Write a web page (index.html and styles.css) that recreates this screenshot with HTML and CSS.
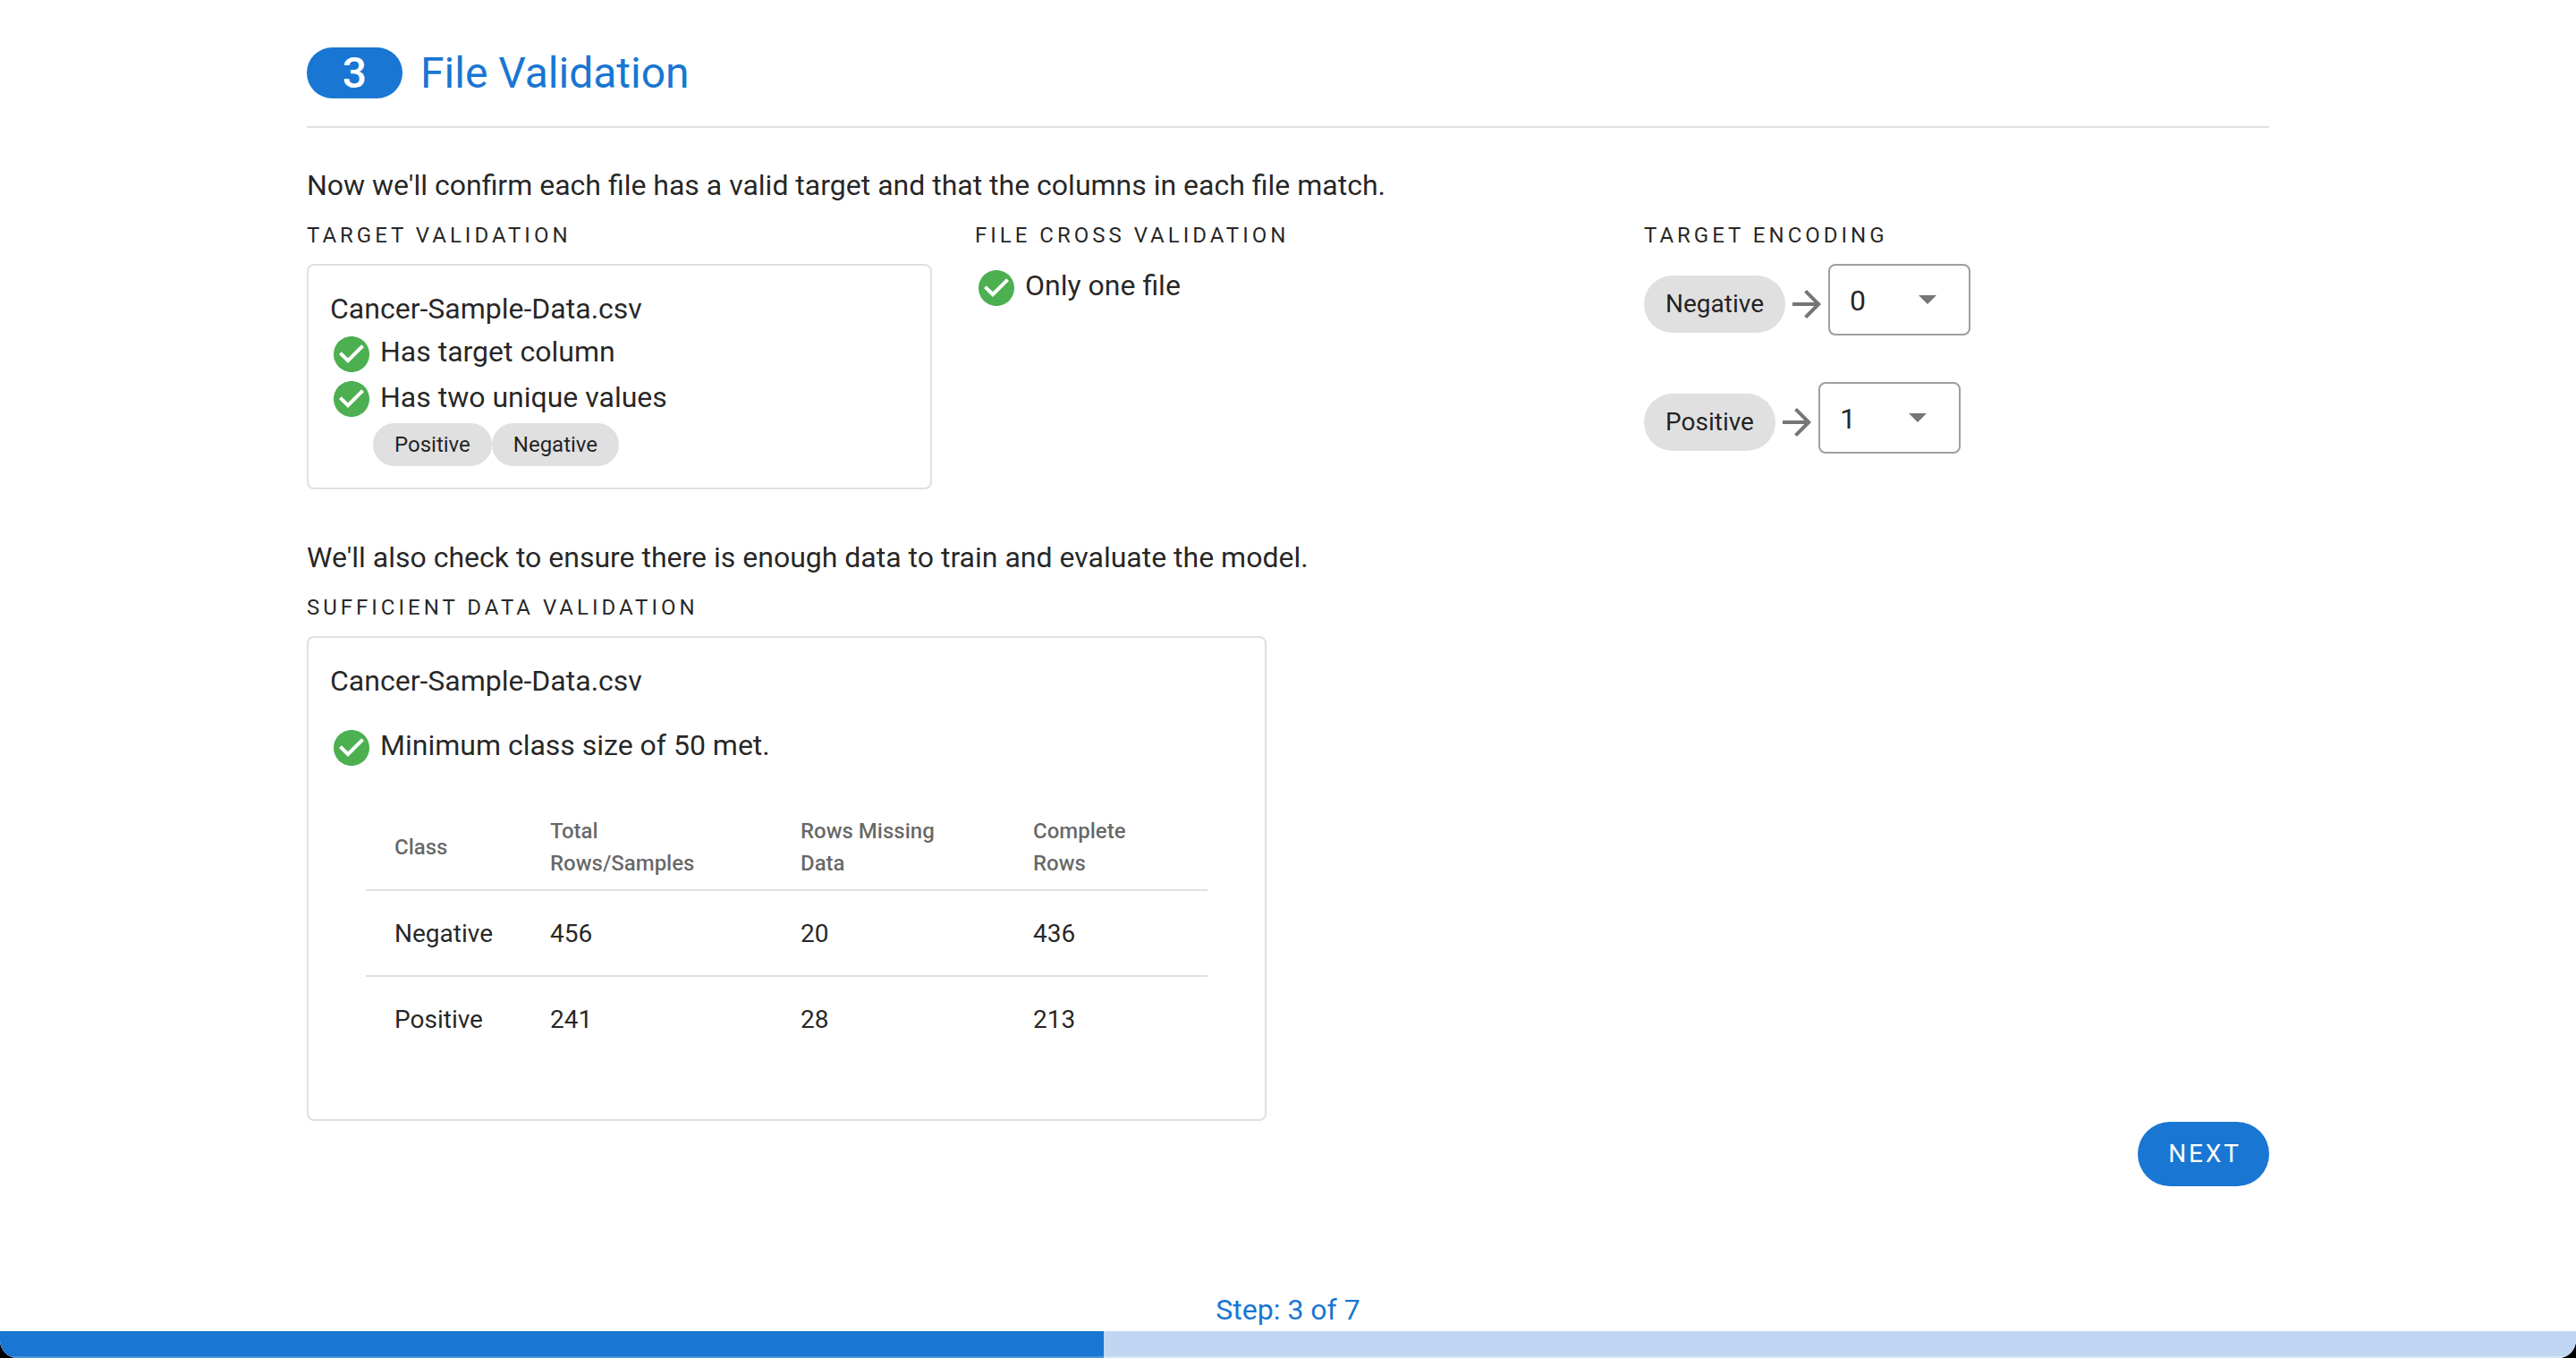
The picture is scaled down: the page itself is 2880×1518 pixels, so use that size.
FILE: index.html
```
<!DOCTYPE html>
<html lang="en">
<head>
    <meta charset="UTF-8">
    <title>File Validation</title>
    <link rel="stylesheet" href="styles.css">
</head>
<body>
    <svg class="icon-defs" width="0" height="0">
        <symbol id="check" viewBox="0 0 24 24">
            <path fill="#4caf50" d="M12 2C6.48 2 2 6.48 2 12s4.48 10 10 10 10-4.48 10-10S17.52 2 12 2z"/>
            <path fill="#fff" d="M10 17l-5-5 1.41-1.41L10 14.17l7.59-7.59L19 8l-9 9z"/>
        </symbol>
        <symbol id="arrow" viewBox="0 0 24 24">
            <path fill="#757575" d="M12 4l-1.41 1.41L16.17 11H4v2h12.17l-5.58 5.59L12 20l8-8z"/>
        </symbol>
    </svg>

    <main class="step">
        <header class="step-header">
            <span class="step-badge">3</span>
            <h1 class="step-title">File Validation</h1>
        </header>

        <p class="intro">Now we'll confirm each file has a valid target and that the columns in each file match.</p>

        <div class="columns">
            <section class="column">
                <h2 class="overline">Target Validation</h2>
                <div class="card card-target">
                    <div class="file-name">Cancer-Sample-Data.csv</div>
                    <div class="check-row"><svg class="check"><use href="#check"/></svg><span>Has target column</span></div>
                    <div class="check-row"><svg class="check"><use href="#check"/></svg><span>Has two unique values</span></div>
                    <div class="chips">
                        <span class="chip">Positive</span>
                        <span class="chip">Negative</span>
                    </div>
                </div>
            </section>

            <section class="column">
                <h2 class="overline">File Cross Validation</h2>
                <div class="check-row cross-row"><svg class="check"><use href="#check"/></svg><span>Only one file</span></div>
            </section>

            <section class="column">
                <h2 class="overline">Target Encoding</h2>
                <div class="encoding-row">
                    <span class="chip chip-large">Negative</span>
                    <svg class="arrow"><use href="#arrow"/></svg>
                    <div class="select"><span>0</span><i class="caret"></i></div>
                </div>
                <div class="encoding-row">
                    <span class="chip chip-large">Positive</span>
                    <svg class="arrow"><use href="#arrow"/></svg>
                    <div class="select"><span>1</span><i class="caret"></i></div>
                </div>
            </section>
        </div>

        <p class="intro intro-second">We'll also check to ensure there is enough data to train and evaluate the model.</p>
        <h2 class="overline">Sufficient Data Validation</h2>

        <div class="card card-data">
            <div class="file-name">Cancer-Sample-Data.csv</div>
            <div class="check-row min-row"><svg class="check"><use href="#check"/></svg><span>Minimum class size of 50 met.</span></div>
            <table class="data-table">
                <thead>
                    <tr>
                        <th class="col-class">Class</th>
                        <th class="col-total">Total Rows/Samples</th>
                        <th class="col-missing">Rows Missing Data</th>
                        <th class="col-complete">Complete Rows</th>
                    </tr>
                </thead>
                <tbody>
                    <tr><td>Negative</td><td>456</td><td>20</td><td>436</td></tr>
                    <tr><td>Positive</td><td>241</td><td>28</td><td>213</td></tr>
                </tbody>
            </table>
        </div>

        <div class="actions">
            <button class="next-btn">NEXT</button>
        </div>
    </main>

    <footer class="progress-area">
        <div class="step-count">Step: 3 of 7</div>
        <div class="progress-track"><div class="progress-fill"></div></div>
    </footer>
</body>
</html>
```

FILE: styles.css
```
* {
    box-sizing: border-box;
}

html, body {
    height: 100%;
    overflow: hidden;
}

html {
    background-color: #000; /* shows only in the rounded bottom corners */
}

body {
    margin: 0;
    background-color: #fff;
    color: rgba(0, 0, 0, 0.87);
    font-family: Roboto, "Liberation Sans", sans-serif;
    display: flex;
    flex-direction: column;
    border-bottom-left-radius: 20px;
    border-bottom-right-radius: 20px;
}

.icon-defs {
    display: block;
    height: 0;
}

.step {
    flex: 1;
    width: 2194px;
    margin: 0 auto;
    padding-top: 53px;
}

.step-header {
    display: flex;
    align-items: center;
    gap: 20px;
    height: 90px;
    padding-bottom: 31px;
    border-bottom: 2px solid #e0e0e0;
}

.step-badge {
    width: 107px;
    height: 57px;
    border-radius: 29px;
    background-color: #1976d2;
    color: #fff;
    font-size: 48px;
    font-weight: 500;
    line-height: 57px;
    text-align: center;
}

.step-title {
    margin: 0;
    color: #1976d2;
    font-size: 48px;
    font-weight: 400;
    line-height: 57px;
}

.intro {
    margin: 40px 0 0;
    font-size: 32px;
    line-height: 48px;
}

.overline {
    margin: 16px 0 0;
    font-size: 24px;
    font-weight: 400;
    line-height: 32px;
    letter-spacing: 4px;
    text-transform: uppercase;
}

.columns {
    display: grid;
    grid-template-columns: 747px 748px 1fr;
}

.card {
    border: 2px solid #e0e0e0;
    border-radius: 8px;
}

.card-target {
    width: 699px;
    height: 252px;
    margin-top: 16px;
    padding: 24px 24px 0;
}

.file-name {
    font-size: 32px;
    line-height: 48px;
}

.check-row {
    display: flex;
    align-items: center;
    gap: 8px;
    font-size: 32px;
    line-height: 48px;
    height: 48px;
}

.check-row + .check-row {
    margin-top: 3px;
}

.check {
    width: 48px;
    height: 48px;
    flex: none;
    margin-top: 6px;
}

.check-row + .check-row .check {
    margin-top: 4px;
}

.chips {
    display: flex;
    margin: 5px 0 0 48px;
}

.chip {
    height: 48px;
    padding: 0 24px;
    border-radius: 24px;
    background-color: #e0e0e0;
    font-size: 24px;
    line-height: 48px;
}

.cross-row {
    margin-top: 16px;
}

.encoding-row {
    display: flex;
    align-items: center;
    height: 80px;
    margin-top: 16px;
}

.encoding-row + .encoding-row {
    margin-top: 52px;
}

.chip-large {
    height: 64px;
    margin-top: 10px;
    border-radius: 32px;
    font-size: 28px;
    line-height: 64px;
}

.arrow {
    width: 48px;
    height: 48px;
    flex: none;
    margin-top: 10px;
}

.select {
    display: flex;
    align-items: center;
    justify-content: space-between;
    width: 159px;
    height: 80px;
    padding: 2px 36px 0 22px;
    border: 2px solid #9e9e9e;
    border-radius: 8px;
    font-size: 32px;
}

.caret {
    width: 0;
    height: 0;
    margin-top: -2px;
    border-left: 10px solid transparent;
    border-right: 10px solid transparent;
    border-top: 10px solid #757575;
}

.intro-second {
    margin-top: 52px;
}

.card-data {
    width: 1073px;
    height: 542px;
    margin-top: 16px;
    padding: 24px 24px 0;
}

.min-row {
    margin-top: 24px;
}

.data-table {
    width: 941px;
    margin: 42px 0 0 40px;
    border-collapse: collapse;
    table-layout: fixed;
}

.data-table th {
    height: 96px;
    padding: 0 32px;
    border-bottom: 2px solid #e0e0e0;
    color: rgba(0, 0, 0, 0.6);
    font-size: 24px;
    font-weight: 500;
    line-height: 36px;
    text-align: left;
}

.data-table td {
    height: 96px;
    padding: 0 32px;
    font-size: 28px;
}

.data-table tbody tr:first-child td {
    border-bottom: 2px solid #e0e0e0;
}

.col-class {
    width: 174px;
}

.col-total {
    width: 280px;
}

.col-missing {
    width: 260px;
}

.col-complete {
    width: 227px;
}

.actions {
    display: flex;
    justify-content: flex-end;
    margin-top: 1px;
}

.next-btn {
    width: 147px;
    height: 72px;
    padding: 0 0 1px 3px;
    border: none;
    border-radius: 36px;
    background-color: #1976d2;
    color: #fff;
    font-family: inherit;
    font-size: 28px;
    font-weight: 400;
    letter-spacing: 2.8px;
}

.progress-area {
    flex: none;
}

.step-count {
    color: #1976d2;
    font-size: 32px;
    line-height: 48px;
    text-align: center;
}

.progress-track {
    height: 30px;
    background-color: #c1d6f2;
    box-shadow: inset 0 -2px #d5e3f7;
}

.progress-fill {
    width: 1234px;
    height: 100%;
    background-color: #1976d2;
    border-bottom: 2px solid #4b91db;
}
```
